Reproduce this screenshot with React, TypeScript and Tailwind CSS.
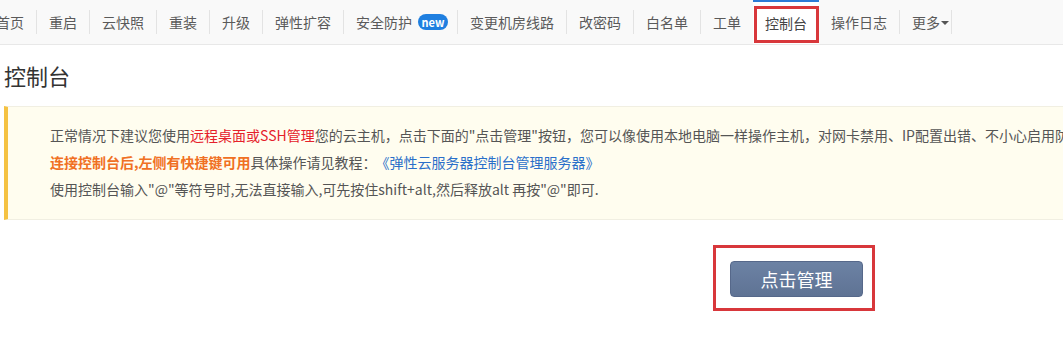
import React from 'react';

const font = { fontFamily: '"Noto Sans CJK SC", "Liberation Sans", sans-serif' };

type NavItem = { label: string; badge?: boolean; active?: boolean; caret?: boolean };

const navItems: NavItem[] = [
  { label: '首页' },
  { label: '重启' },
  { label: '云快照' },
  { label: '重装' },
  { label: '升级' },
  { label: '弹性扩容' },
  { label: '安全防护', badge: true },
  { label: '变更机房线路' },
  { label: '改密码' },
  { label: '白名单' },
  { label: '工单' },
  { label: '控制台', active: true },
  { label: '操作日志' },
  { label: '更多', caret: true },
];

function Separator() {
  return <span className="h-[24px] w-px shrink-0 bg-[#e3e3e3]" />;
}

export default function App() {
  return (
    <div className="h-[352px] w-[1063px] overflow-hidden bg-white text-[#555]" style={font}>
      {/* Top tab bar */}
      <div className="flex h-[45px] items-center border-b border-[#e8e8e8] bg-[#f9f9f9]">
        <div className="ml-[-16px] flex h-full items-center">
          {navItems.map((item, i) => {
            const next = navItems[i + 1];
            const showSep = !item.active && !(next && next.active);
            return (
              <React.Fragment key={item.label}>
                {item.active ? (
                  <div className="relative flex h-full items-center border-t-2 border-[#2b7bd6] bg-white px-[12px] text-[14px] leading-[20px] text-[#444]">
                    {item.label}
                    <span className="absolute left-[1px] right-0 top-[4px] bottom-[1px] border-[3px] border-[#d8373b]" />
                  </div>
                ) : (
                  <div
                    className={
                      'flex h-full items-center text-[14px] leading-[20px] text-[#5a5a5a] ' +
                      (item.badge ? 'pl-[12px] pr-[9px]' : item.caret ? 'pl-[12px] pr-[2px]' : 'px-[12px]')
                    }
                  >
                    <span className="whitespace-nowrap">{item.label}</span>
                    {item.badge && (
                      <span className="ml-[6px] flex h-[16px] w-[30px] items-center justify-center rounded-full bg-[#1f7fe0] text-[11px] font-semibold leading-none text-white">
                        new
                      </span>
                    )}
                    {item.caret && (
                      <span className="ml-[1px] mt-[2px] h-0 w-0 border-x-[4px] border-t-[4px] border-x-transparent border-t-[#555]" />
                    )}
                  </div>
                )}
                {showSep && <Separator />}
              </React.Fragment>
            );
          })}
        </div>
      </div>

      {/* Title */}
      <h1 className="ml-[4px] mt-[15px] text-[22px] font-normal leading-[30px] text-[#333]">控制台</h1>

      {/* Notice */}
      <div className="ml-[4px] mt-[16px] w-[1100px] border-y border-l-4 border-y-[#f1efe2] border-l-[#f5c242] bg-[#fffdef] pb-[16px] pl-[42px] pt-[15px] text-[14px] leading-[27px] text-[#555]">
        <p className="whitespace-nowrap">
          正常情况下建议您使用<span className="text-[#e5212b]">远程桌面或SSH管理</span>
          您的云主机，点击下面的"点击管理"按钮，您可以像使用本地电脑一样操作主机，对网卡禁用、IP配置出错、不小心启用防火墙等导致无法远程连接的情况进行修复。
        </p>
        <p className="whitespace-nowrap">
          <span className="font-bold text-[#f07023]">连接控制台后,左侧有快捷键可用</span>
          具体操作请见教程：<a className="ml-[6px] text-[#2a6fc9]">《弹性云服务器控制台管理服务器》</a>
        </p>
        <p className="whitespace-nowrap">
          使用控制台输入"@"等符号时,无法直接输入,可先按住shift+alt,然后释放alt 再按"@"即可.
        </p>
      </div>

      {/* Manage button */}
      <div className="ml-[713px] mt-[25px] inline-flex border-[3px] border-[#d8373b] pb-[11px] pl-[14px] pr-[9px] pt-[13px]">
        <button className="flex h-[36px] w-[133px] items-center justify-center rounded-[4px] border border-[#56688a] bg-gradient-to-b from-[#6c82a4] to-[#5f7394] text-[18px] leading-none text-white">
          点击管理
        </button>
      </div>
    </div>
  );
}
